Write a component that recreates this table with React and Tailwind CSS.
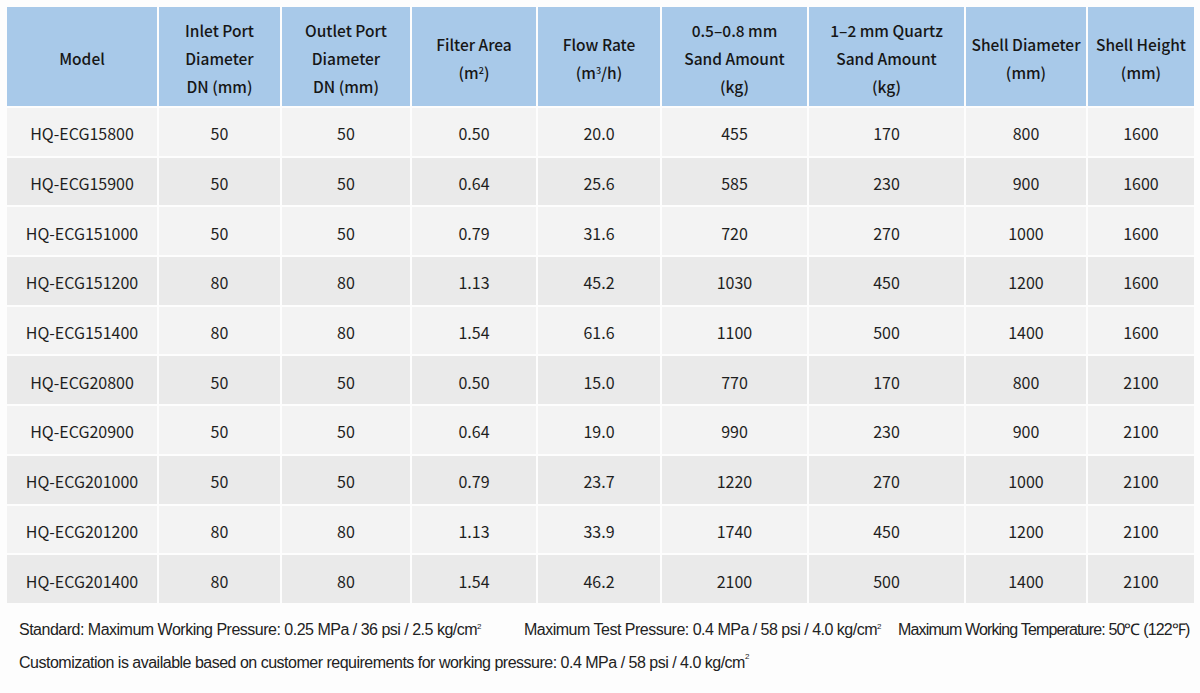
import React from 'react';

const headers = [
    ['Model'],
    ['Inlet Port', 'Diameter', 'DN (mm)'],
    ['Outlet Port', 'Diameter', 'DN (mm)'],
    ['Filter Area', <>(m<sup className="text-[9px]">2</sup>)</>],
    ['Flow Rate', <>(m<sup className="text-[9px]">3</sup>/h)</>],
    ['0.5–0.8 mm', 'Sand Amount', '(kg)'],
    ['1–2 mm Quartz', 'Sand Amount', '(kg)'],
    ['Shell Diameter', '(mm)'],
    ['Shell Height', '(mm)'],
];

const rows = [
    ['HQ-ECG15800', '50', '50', '0.50', '20.0', '455', '170', '800', '1600'],
    ['HQ-ECG15900', '50', '50', '0.64', '25.6', '585', '230', '900', '1600'],
    ['HQ-ECG151000', '50', '50', '0.79', '31.6', '720', '270', '1000', '1600'],
    ['HQ-ECG151200', '80', '80', '1.13', '45.2', '1030', '450', '1200', '1600'],
    ['HQ-ECG151400', '80', '80', '1.54', '61.6', '1100', '500', '1400', '1600'],
    ['HQ-ECG20800', '50', '50', '0.50', '15.0', '770', '170', '800', '2100'],
    ['HQ-ECG20900', '50', '50', '0.64', '19.0', '990', '230', '900', '2100'],
    ['HQ-ECG201000', '50', '50', '0.79', '23.7', '1220', '270', '1000', '2100'],
    ['HQ-ECG201200', '80', '80', '1.13', '33.9', '1740', '450', '1200', '2100'],
    ['HQ-ECG201400', '80', '80', '1.54', '46.2', '2100', '500', '1400', '2100'],
];

const Sup = ({ children }) => <sup className="text-[8px] -top-[6px]">{children}</sup>;

export default function App() {
    return (
        <div className="w-[1200px] h-[693px] bg-[#fdfdfd] pt-[7px] pl-[7px] text-[#1e1e1e]" style={{ fontFamily: '"Noto Sans CJK KR", "Noto Sans", sans-serif' }}>
            {/* spec table */}
            <div className="grid grid-cols-[150px_121px_128px_124px_122px_145px_155px_120px_106px] gap-[2px] w-[1185px]">
                {headers.map((h, i) => (
                    <div key={i} className="h-[99px] bg-[#a8c9e9] flex flex-col items-center justify-center pt-[2px] text-[15.5px] font-medium leading-[28px] text-center text-[#161616]">
                        {h.map((line, j) => <div key={j}>{line}</div>)}
                    </div>
                ))}
                {rows.map((r, i) => r.map((c, j) => (
                    <div key={`${i}-${j}`} className={`h-[47.7px] flex items-center justify-center pt-[3px] text-[16px] ${i % 2 === 0 ? 'bg-[#f3f3f3]' : 'bg-[#eaeaea]'}`}>
                        {c}
                    </div>
                )))}
            </div>

            {/* notes */}
            <div className="text-[16px] tracking-[-0.5px] text-[#222] pl-[12px] whitespace-nowrap" style={{ fontFamily: '"Liberation Sans", sans-serif' }}>
                <div className="flex mt-[17px] h-[20px] items-center">
                    <span className="w-[505px] shrink-0">Standard: Maximum Working Pressure: 0.25 MPa / 36 psi / 2.5 kg/cm<Sup>2</Sup></span>
                    <span className="w-[374px] shrink-0">Maximum Test Pressure: 0.4 MPa / 58 psi / 4.0 kg/cm<Sup>2</Sup></span>
                    <span className="shrink-0 tracking-[-0.85px]">Maximum Working Temperature: 50℃ (122℉)</span>
                </div>
                <div className="mt-[13px] h-[20px] flex items-center">
                    Customization is available based on customer requirements for working pressure: 0.4 MPa / 58 psi / 4.0 kg/cm<Sup>2</Sup>
                </div>
            </div>
        </div>
    );
}
